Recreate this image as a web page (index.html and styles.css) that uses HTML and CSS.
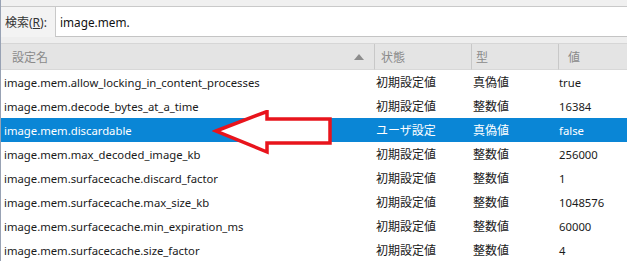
FILE: index.html
```html
<!DOCTYPE html>
<html lang="ja">
<head>
<meta charset="utf-8">
<link rel="stylesheet" href="styles.css">
</head>
<body>
<div class="win">
  <div class="topstrip"></div>
  <div class="search">
    <label class="lbl">検索(<u>R</u>):</label>
    <div class="input">image.mem.</div>
  </div>
  <div class="gap"></div>
  <div class="grid">
    <div class="hdr c1">設定名<span class="sort"></span></div>
    <div class="hdr c2">状態</div>
    <div class="hdr c3">型</div>
    <div class="hdr c4">値</div>

    <div class="cell">image.mem.allow_locking_in_content_processes</div><div class="cell s">初期設定値</div><div class="cell t">真偽値</div><div class="cell v">true</div>
    <div class="cell">image.mem.decode_bytes_at_a_time</div><div class="cell s">初期設定値</div><div class="cell t">整数値</div><div class="cell v">16384</div>
    <div class="cell sel">image.mem.discardable</div><div class="cell s sel">ユーザ設定</div><div class="cell t sel">真偽値</div><div class="cell v sel">false</div>
    <div class="cell">image.mem.max_decoded_image_kb</div><div class="cell s">初期設定値</div><div class="cell t">整数値</div><div class="cell v">256000</div>
    <div class="cell">image.mem.surfacecache.discard_factor</div><div class="cell s">初期設定値</div><div class="cell t">整数値</div><div class="cell v">1</div>
    <div class="cell">image.mem.surfacecache.max_size_kb</div><div class="cell s">初期設定値</div><div class="cell t">整数値</div><div class="cell v">1048576</div>
    <div class="cell">image.mem.surfacecache.min_expiration_ms</div><div class="cell s">初期設定値</div><div class="cell t">整数値</div><div class="cell v">60000</div>
    <div class="cell">image.mem.surfacecache.size_factor</div><div class="cell s">初期設定値</div><div class="cell t">整数値</div><div class="cell v">4</div>
  </div>
  <svg class="arrow" width="120" height="50" viewBox="0 0 120 50">
    <polygon points="4,21 55,1.5 55,9 118,9 118,33 55,33 55,42" fill="#fff" stroke="#e8141c" stroke-width="3.5" stroke-linejoin="miter"/>
  </svg>
</div>
</body>
</html>
```
FILE: styles.css
```css
html, body { margin: 0; padding: 0; background: #fff; }
.win {
  position: relative;
  width: 627px;
  height: 261px;
  overflow: hidden;
  border-left: 1px solid #98a2b4;
  box-sizing: border-box;
  font-family: "Noto Sans", "Noto Sans CJK JP", sans-serif;
  font-size: 11.3px;
  color: #1a1a1a;
}
.topstrip {
  height: 7px;
  background: #f0f0f0;
  border-bottom: 1px solid #c9c9c9;
  box-sizing: border-box;
}
.search {
  display: flex;
  align-items: stretch;
  height: 30px;
  background: #f3f3f3;
}
.lbl {
  width: 50px;
  padding-left: 4px;
  display: flex;
  align-items: center;
  color: #333;
  font-size: 12px;
}
.lbl u { text-decoration: underline; }
.input {
  flex: 1;
  background: #fff;
  border-left: 1px solid #c9c9c9;
  border-bottom: 1px solid #c4c4c4;
  display: flex;
  align-items: center;
  padding-left: 4px;
  font-size: 11.8px;
  color: #111;
}
.gap {
  height: 6px;
  background: #eeeeee;
  border-bottom: 1px solid #d6d6d6;
}
.grid {
  display: grid;
  grid-template-columns: 373px 97px 87px 1fr;
  grid-template-rows: 26px;
  grid-auto-rows: 24px;
}
.hdr {
  background: #e4e4e4;
  color: #8a8a8a;
  display: flex;
  align-items: center;
  border-bottom: 1px solid #d8d8d8;
  font-size: 12px;
}
.c1 { padding-left: 11px; position: relative; }
.c2, .c3, .c4 { border-left: 1px solid #c8c8c8; padding-left: 6px; }
.c3 { padding-left: 4px; }
.c4 { padding-left: 9px; }
.sort {
  position: absolute;
  right: 10px;
  top: 10px;
  width: 0; height: 0;
  border-left: 5px solid transparent;
  border-right: 5px solid transparent;
  border-bottom: 6px solid #8c8c8c;
}
.cell {
  display: flex;
  align-items: center;
  padding-left: 3px;
  white-space: nowrap;
  color: #1a1a1a;
}
.cell.s { padding-left: 2px; font-size: 12px; }
.cell.t { padding-left: 2px; font-size: 12px; }
.cell.v { padding-left: 1px; }
.cell.sel { background: #0a86d6; color: #fff; }
.arrow {
  position: absolute;
  left: 211px;
  top: 110px;
}
```
